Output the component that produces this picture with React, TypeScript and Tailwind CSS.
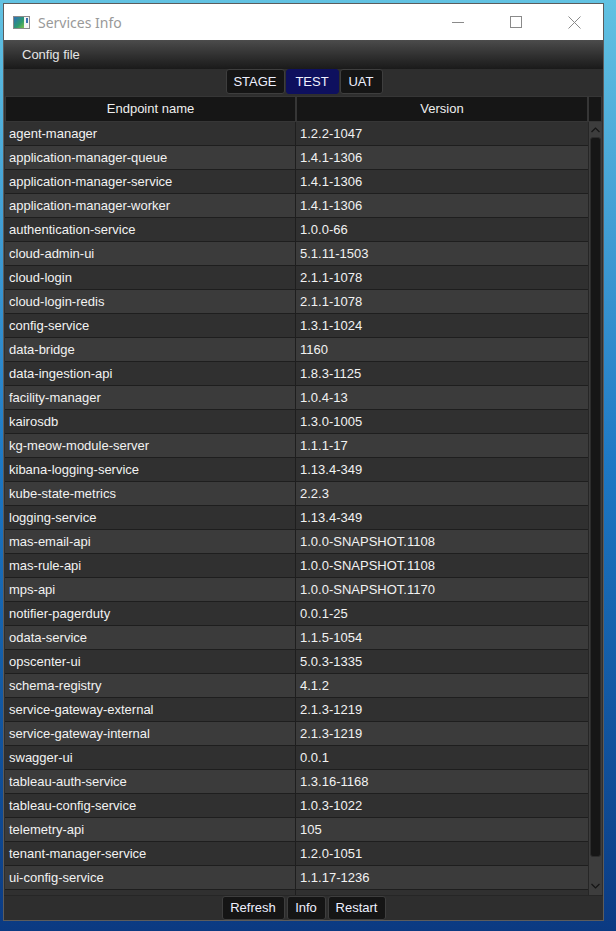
import React from 'react';

const services: [string, string][] = [
  ['agent-manager', '1.2.2-1047'],
  ['application-manager-queue', '1.4.1-1306'],
  ['application-manager-service', '1.4.1-1306'],
  ['application-manager-worker', '1.4.1-1306'],
  ['authentication-service', '1.0.0-66'],
  ['cloud-admin-ui', '5.1.11-1503'],
  ['cloud-login', '2.1.1-1078'],
  ['cloud-login-redis', '2.1.1-1078'],
  ['config-service', '1.3.1-1024'],
  ['data-bridge', '1160'],
  ['data-ingestion-api', '1.8.3-1125'],
  ['facility-manager', '1.0.4-13'],
  ['kairosdb', '1.3.0-1005'],
  ['kg-meow-module-server', '1.1.1-17'],
  ['kibana-logging-service', '1.13.4-349'],
  ['kube-state-metrics', '2.2.3'],
  ['logging-service', '1.13.4-349'],
  ['mas-email-api', '1.0.0-SNAPSHOT.1108'],
  ['mas-rule-api', '1.0.0-SNAPSHOT.1108'],
  ['mps-api', '1.0.0-SNAPSHOT.1170'],
  ['notifier-pagerduty', '0.0.1-25'],
  ['odata-service', '1.1.5-1054'],
  ['opscenter-ui', '5.0.3-1335'],
  ['schema-registry', '4.1.2'],
  ['service-gateway-external', '2.1.3-1219'],
  ['service-gateway-internal', '2.1.3-1219'],
  ['swagger-ui', '0.0.1'],
  ['tableau-auth-service', '1.3.16-1168'],
  ['tableau-config-service', '1.0.3-1022'],
  ['telemetry-api', '105'],
  ['tenant-manager-service', '1.2.0-1051'],
  ['ui-config-service', '1.1.17-1236'],
];

const tabs = [
  { label: 'STAGE', w: 'w-[59px]', active: false },
  { label: 'TEST', w: 'w-[53px]', active: true },
  { label: 'UAT', w: 'w-[43px]', active: false },
];

const actions = [
  { label: 'Refresh', w: 'w-[63px]' },
  { label: 'Info', w: 'w-[39px]' },
  { label: 'Restart', w: 'w-[58px]' },
];

function AppIcon() {
  return (
    <svg width="17" height="13" viewBox="0 0 17 13">
      <defs>
        <linearGradient id="ico" x1="0" y1="0" x2="1" y2="1">
          <stop offset="0" stopColor="#2f6fb8" />
          <stop offset="0.6" stopColor="#2e9a6e" />
          <stop offset="1" stopColor="#7cc24a" />
        </linearGradient>
      </defs>
      <rect x="0.5" y="0.5" width="16" height="12" fill="#f4f4f4" stroke="#8a8a8a" />
      <rect x="1" y="1" width="10" height="11" fill="url(#ico)" />
      <rect x="13" y="2" width="2" height="5" fill="#3a6fb0" />
    </svg>
  );
}

export default function App() {
  return (
    <div className="w-[616px] h-[931px] overflow-hidden bg-gradient-to-b from-[#62c2e2] via-[#1d78c4] to-[#0b3a82] font-['Liberation_Sans',Arial,sans-serif]">
      <div className="ml-[3px] mt-[3px] w-[601px] h-[918px] border border-[#5c5c5c] flex flex-col bg-[#2e2e2e]">
        {/* title bar */}
        <div className="h-[36px] bg-white flex items-center shrink-0">
          <div className="ml-[9px] mt-[1px] flex items-center">
            <AppIcon />
          </div>
          <span className="ml-[8px] text-[14px] text-[#999999] font-['Noto_Sans','Open_Sans',sans-serif]">Services Info</span>
          <div className="ml-auto flex items-center h-full">
            <div className="w-[58px] h-full flex items-center justify-center">
              <div className="w-[12px] h-[1px] bg-[#8a8a8a]" />
            </div>
            <div className="w-[58px] h-full flex items-center justify-center">
              <div className="w-[12px] h-[12px] border border-[#8a8a8a]" />
            </div>
            <div className="w-[58px] h-full flex items-center justify-center">
              <svg width="13" height="13" viewBox="0 0 13 13">
                <path d="M0.5 0.5 L12.5 12.5 M12.5 0.5 L0.5 12.5" stroke="#8a8a8a" strokeWidth="1" />
              </svg>
            </div>
          </div>
        </div>

        {/* menu bar */}
        <div className="h-[29px] shrink-0 bg-gradient-to-b from-[#4c4c4c] to-[#1a1a1a] flex items-center pl-[18px]">
          <span className="text-[13px] text-[#e6e6e6] mt-[1px]">Config file</span>
        </div>

        {/* environment tabs */}
        <div className="h-[27px] shrink-0 flex justify-center items-start gap-[1px] pl-[1px]">
          {tabs.map((t) => (
            <div
              key={t.label}
              className={`${t.w} h-[25px] rounded-[3px] flex items-center justify-center text-[13px] text-[#eef0ff] ${
                t.active ? 'bg-[#0e105e] border border-[#0e105e]' : 'bg-[#151515] border border-[#3e3e3e]'
              }`}
            >
              {t.label}
            </div>
          ))}
        </div>

        {/* table */}
        <div className="flex-1 flex flex-col px-[1px] min-h-0">
          <div className="h-[26px] shrink-0 flex bg-[#0e0e0e]">
            <div className="w-[291px] border border-[#363636] bg-[#161616] flex items-center justify-center text-[13px] text-[#eeeeee]">
              Endpoint name
            </div>
            <div className="w-[292px] border border-[#363636] bg-[#161616] flex items-center justify-center text-[13px] text-[#eeeeee]">
              Version
            </div>
            <div className="w-[14px] border border-[#363636] bg-[#161616]" />
          </div>

          <div className="flex-1 flex min-h-0">
            <div className="w-[583px] overflow-hidden">
              {services.map(([name, version], i) => (
                <div
                  key={name}
                  className={`h-[24px] flex border-b border-[#1e1e1e] text-[13px] text-[#f2f2f2] ${
                    i % 2 === 0 ? 'bg-[#303030]' : 'bg-[#3b3b3b]'
                  }`}
                >
                  <div className="w-[291px] pl-[4px] flex items-center border-r border-[#1e1e1e]">{name}</div>
                  <div className="w-[292px] pl-[4px] flex items-center">{version}</div>
                </div>
              ))}
              {/* partially visible next row */}
              <div className="h-[24px] flex bg-[#303030]">
                <div className="w-[291px] border-r border-[#1e1e1e]" />
                <div className="w-[292px]" />
              </div>
            </div>
            {/* scrollbar */}
            <div className="w-[14px] bg-[#3d3d3d] border-l border-[#262626] flex flex-col items-center">
              <svg width="9" height="6" viewBox="0 0 9 6" className="mt-[5px]">
                <path d="M0.5 5 L4.5 1 L8.5 5" stroke="#151515" strokeWidth="1.2" fill="none" />
              </svg>
              <div className="mt-[4px] w-[11px] h-[720px] rounded-[3px] bg-[#161616] border border-[#2c2c2c]" />
              <svg width="9" height="6" viewBox="0 0 9 6" className="mt-[26px]">
                <path d="M0.5 1 L4.5 5 L8.5 1" stroke="#151515" strokeWidth="1.2" fill="none" />
              </svg>
            </div>
          </div>
        </div>

        {/* action buttons */}
        <div className="h-[25px] shrink-0 flex justify-center items-end gap-[2px] border-t border-[#262626]">
          {actions.map((a) => (
            <div
              key={a.label}
              className={`${a.w} h-[24px] rounded-[3px] bg-[#151515] border border-[#3e3e3e] flex items-center justify-center text-[13px] text-[#eef0ff]`}
            >
              {a.label}
            </div>
          ))}
        </div>
      </div>
    </div>
  );
}
